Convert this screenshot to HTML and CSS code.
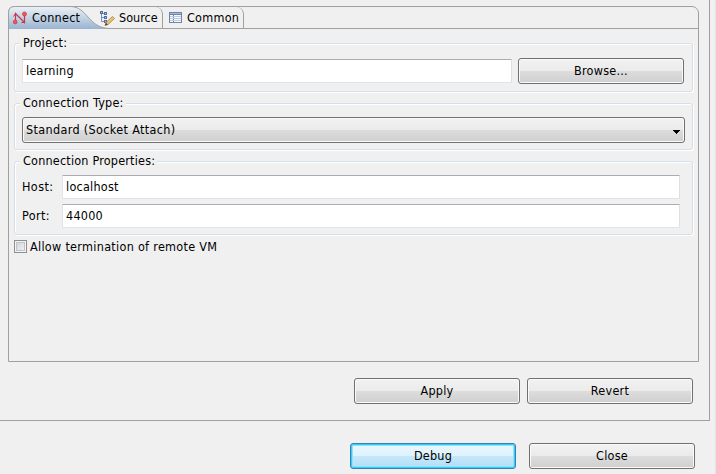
FILE: index.html
```html
<!DOCTYPE html>
<html lang="en">
<head>
<meta charset="utf-8">
<title>Debug Configurations</title>
<link rel="stylesheet" href="styles.css">
</head>
<body>
<div class="window">
  <main class="editor">
    <section class="folder">
      <nav class="tabs">
        <div class="tab tab-connect">
          <svg class="tab-shape" width="114" height="23" viewBox="0 0 114 23">
            <defs><linearGradient id="active" x1="0" y1="0" x2="0" y2="1"><stop offset="0" stop-color="#edf1f6"/><stop offset="1" stop-color="#99b4d1"/></linearGradient></defs>
            <path d="M.5 23V6.500Q.5 .5 6.500 .5H62C80 .5 80 22.500 102 22.500V23Z" fill="url(#active)"/>
            <path d="M.5 23V6.500Q.5 .5 6.500 .5H62C80 .5 80 22.500 102 22.500H114" fill="none" stroke="#a0a0a0"/>
          </svg>
          <svg class="icon" width="16" height="16" viewBox="0 0 16 16">
            <path d="M3.500 11V3.500L12.500 12.500V5" fill="none" stroke="#c8343f" stroke-width="1.200"/>
            <path d="M1.500 6.500L3.500 3.500M9.500 12.500H12.500" fill="none" stroke="#c8343f"/>
            <circle cx="3.200" cy="12" r="1.900" fill="#f0555b" stroke="#cf3541" stroke-width=".7"/>
            <circle cx="12.500" cy="4" r="2" fill="#f0555b" stroke="#cf3541" stroke-width=".7"/>
          </svg>
          <span>Connect</span>
        </div>
        <div class="tab tab-source">
          <svg class="icon" width="16" height="16" viewBox="0 0 16 16">
            <path d="M2.500 3V11.500H6M2.500 7.500H6M2.500 3.500H6" fill="none" stroke="#7890b8"/>
            <path d="M1 1h3v3H1zM5 2h3v3H5zM5 6h3v3H5zM5 10h3v3H5z" fill="#4a70a8"/>
            <path d="M2 2h1v1H2zM6 3h1v1H6zM6 7h1v1H6zM6 11h1v1H6z" fill="#a9c1e3"/>
            <path d="M7 12.500L13.500 6.500L15.500 8.500L9 14.500L6 15.500Z" fill="#edc477" stroke="#9d6f31" stroke-width=".7"/>
            <path d="M6 15.500L7 13L9 14.500Z" fill="#4d3a2b"/>
          </svg>
          <span>Source</span>
        </div>
        <div class="tab tab-common">
          <svg class="icon" width="14" height="12" viewBox="0 0 14 12" shape-rendering="crispEdges">
            <path d="M0 0h13v11H0z" fill="#7184a8"/>
            <path d="M1 1h11v1H1z" fill="#a5b9d8"/>
            <path d="M1 3h3v7H1zM5 3h7v7H5z" fill="#f4f8ff"/>
            <path d="M1 4h11v1H1zM1 6h11v1H1zM1 8h11v1H1z" fill="#c0cde0"/>
          </svg>
          <span>Common</span>
        </div>
      </nav>
      <div class="page">
        <fieldset class="group project">
          <legend>Project:</legend>
          <input class="field" type="text" value="learning">
          <button class="button" type="button">Browse...</button>
        </fieldset>
        <fieldset class="group type">
          <legend>Connection Type:</legend>
          <div class="combo"><span>Standard (Socket Attach)</span><svg width="8" height="4" viewBox="0 0 8 4" shape-rendering="crispEdges"><path d="M0 0h7v1H0zM1 1h5v1H1zM2 2h3v1H2zM3 3h1v1H3z"/></svg></div>
        </fieldset>
        <fieldset class="group properties">
          <legend>Connection Properties:</legend>
          <label class="row"><span class="name">Host:</span><input class="field" type="text" value="localhost"></label>
          <label class="row"><span class="name">Port:</span><input class="field" type="text" value="44000"></label>
        </fieldset>
        <label class="check"><span class="box"></span><span class="caption">Allow termination of remote VM</span></label>
      </div>
    </section>
    <div class="actions">
      <button class="button" type="button">Apply</button>
      <button class="button" type="button">Revert</button>
    </div>
  </main>
  <footer class="footer">
    <button class="button primary" type="button">Debug</button>
    <button class="button" type="button">Close</button>
  </footer>
</div>
</body>
</html>
```
FILE: styles.css
```css
* { box-sizing: border-box; }
body { margin: 0; overflow: hidden; background: #f0f0f0; }
body, input, button {
  font-family: "DejaVu Sans Condensed", "DejaVu Sans", sans-serif;
  font-stretch: condensed;
  font-size: 12.5px;
  letter-spacing: 0.25px;
  line-height: 16px;
  color: #000;
}
span, legend { white-space: nowrap; }
.window { width: 716px; height: 474px; border-right: 1px solid #dce4ed; }
.editor {
  width: 710px; height: 421px; padding: 6px 0 0 8px;
  border-right: 1px solid #a0a0a0; border-bottom: 1px solid #a0a0a0;
}
.folder {
  width: 691px; height: 356px;
  border: 1px solid #a0a0a0; border-radius: 7px 7px 0 0;
}
.tabs { display: flex; height: 22px; border-bottom: 1px solid #a0a0a0; }
.tab { display: flex; align-items: center; position: relative; height: 21px; }
.tab span, .tab .icon { position: relative; flex: none; }
.tab-shape { position: absolute; left: -1px; top: -1px; }
.tab-connect { width: 88px; padding-left: 3px; }
.tab-connect span { margin-left: 4px; }
.tab-source { width: 66px; padding-left: 2px; border-right: 1px solid #a0a0a0; border-top-right-radius: 7px; }
.tab-source span { margin-left: 4px; letter-spacing: 0; }
.tab-common { width: 81px; padding-left: 6px; border-right: 1px solid #a0a0a0; border-top-right-radius: 7px; }
.tab-common span { margin-left: 4px; }
.page { padding: 7px 5px 0; }
.group {
  position: relative; display: flex; margin: 0; padding: 0 0 0 7px; min-width: 0;
  width: 679px; border: 1px solid #d5dfe9; border-radius: 3px;
  box-shadow: 1px 1px 0 #fff, inset 1px 1px 0 #fff;
}
.group legend { float: left; position: absolute; left: 5px; top: -9px; padding: 0 2px 0 3px; background: #f0f0f0; }
.project { height: 49px; margin-top: 7px; padding-top: 14px; gap: 6px; }
.project .field { width: 490px; margin-top: 1px; }
.type { height: 47px; margin-top: 11px; padding-top: 13px; }
.properties { height: 74px; margin-top: 11px; padding-top: 13px; flex-direction: column; gap: 5px; }
.properties legend { letter-spacing: 0.2px; }
.field {
  height: 24px; margin: 0; padding: 0 0 1px 3px; background: #fff;
  border: 1px solid #e2e3ea; border-top-color: #abadb3; border-right-color: #dbdfe6; border-radius: 1px;
}
.row { display: flex; align-items: center; height: 24px; }
.name { width: 40px; letter-spacing: 0.4px; }
.row .field { width: 618px; }
.button, .combo {
  height: 26px; border: 1px solid #707070; border-radius: 3px;
  background: linear-gradient(#f2f2f2, #ebebeb 48%, #dddddd 50%, #cfcfcf);
  box-shadow: inset 0 0 0 1px #fafafa;
}
.button { width: 166px; margin: 0; padding: 0 0 1px; }
.combo { width: 663px; display: flex; align-items: center; justify-content: space-between; padding: 0 4px 1px 3px; }
.combo span { letter-spacing: 0.35px; }
.combo svg { position: relative; top: 2px; left: 1px; }
.check { display: flex; align-items: center; height: 16px; margin-top: 4px; gap: 3px; }
.caption { letter-spacing: 0.3px; }
.box { position: relative; top: -1px; width: 13px; height: 13px; border: 1px solid #8e8f8f; background: linear-gradient(135deg, #cbcfd5, #f6f6f6); box-shadow: inset 0 0 0 1px #f4f4f4, inset 0 0 0 2px #bfc4ca; }
.actions { display: flex; gap: 7px; padding: 16px 0 0 346px; }
.footer { display: flex; gap: 13px; padding: 22px 0 0 350px; }
.primary {
  border-color: #3c7fb1;
  background: linear-gradient(#eaf6fd, #dff3fd 48%, #c6e8fa 50%, #b0def8);
  box-shadow: inset 0 0 0 1px #35cdf8, inset 0 0 0 2px #8ce3fa;
}
```
